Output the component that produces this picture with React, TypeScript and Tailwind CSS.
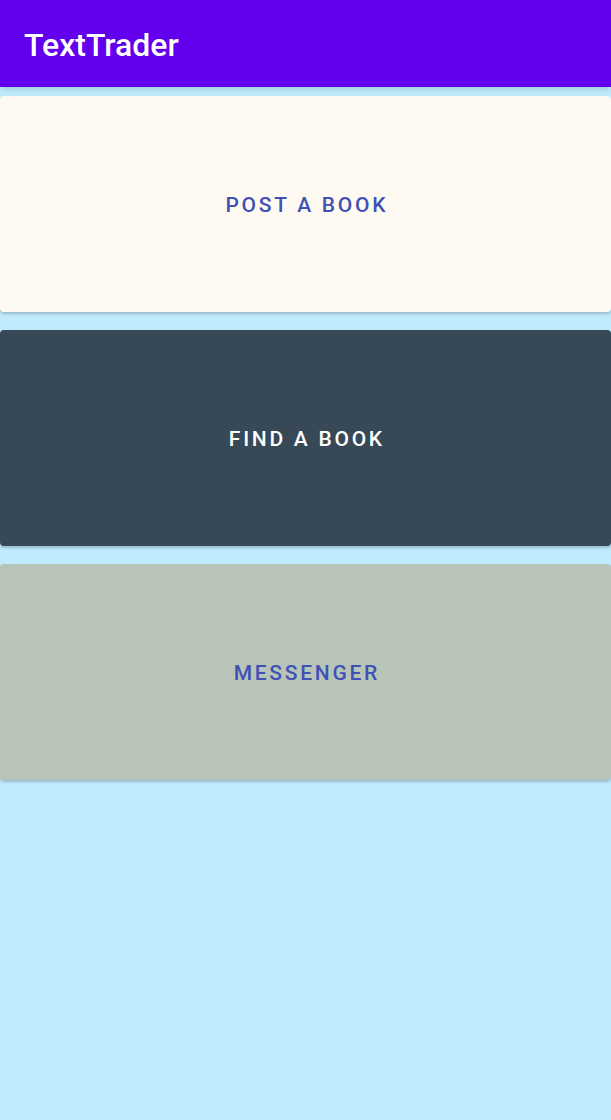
const BUTTONS = [
  { label: "Post a book", bg: "bg-[#fefaf2]", text: "text-[#3f51b5]" },
  { label: "Find a book", bg: "bg-[#374957]", text: "text-white" },
  { label: "Messenger", bg: "bg-[#b9c4b8]", text: "text-[#3f51b5]" },
]

export default function App() {
  return (
    <div className="min-h-screen bg-[#bfebfd] font-['Roboto',sans-serif]">
      <header className="h-[87px] bg-[#6200ee] flex items-center px-6 shadow-md">
        <h1 className="text-white text-[32px] font-medium leading-none pt-[2px]">TextTrader</h1>
      </header>
      <main className="flex flex-col gap-[18px] pt-[9px]">
        {BUTTONS.map((b) => (
          <button
            key={b.label}
            className={`h-[216px] w-full rounded-[4px] ${b.bg} ${b.text} shadow-[0_2px_3px_rgba(0,0,0,0.2)] flex items-center justify-center`}
          >
            <span className="uppercase text-[21px] font-medium tracking-[0.13em] pl-[0.13em] pt-[3px]">{b.label}</span>
          </button>
        ))}
      </main>
    </div>
  )
}
